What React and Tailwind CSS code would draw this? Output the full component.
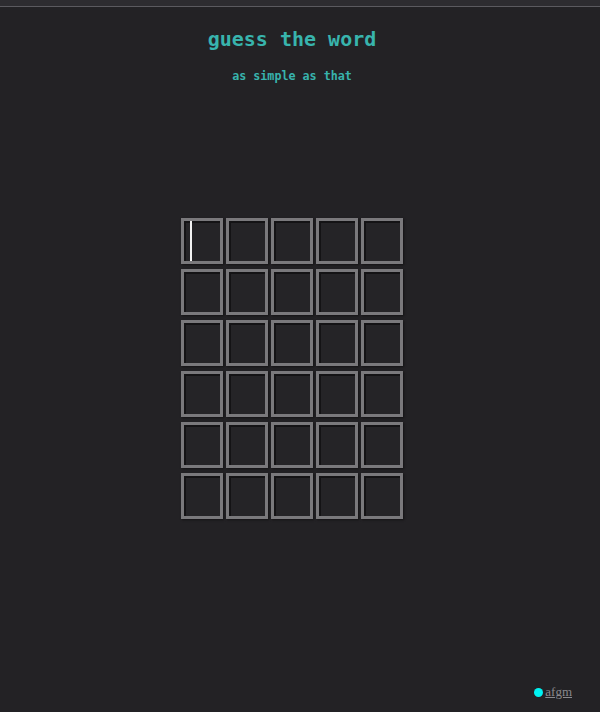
import React from "react";

const ROWS = 6;
const COLS = 5;

function Tile({ active }) {
  return (
    <div className="relative w-[42px] h-[46px] border-[3px] border-[#7a797c] bg-[#252427] shadow-[inset_1px_1px_0_1px_#141315,1px_1px_2px_#141315]">
      {active && <span className="absolute left-[6px] top-0 w-[2px] h-[40px] bg-[#f2f2f2]" />}
    </div>
  );
}

export default function App() {
  return (
    <div className="min-h-[712px] flex flex-col bg-[#232225]" style={{ fontFamily: "'DejaVu Sans Mono', monospace" }}>
      {/* top strip */}
      <div className="h-[7px] bg-[#2d2c30] border-b border-[#5b5a5f]" />

      <div className="flex flex-col pr-[16px]">
        <header className="flex flex-col items-center">
          <h1 className="mt-[18px] text-[20px] leading-[28px] font-bold text-[#38b4ad]">guess the word</h1>
          <p className="mt-[15px] text-[11.7px] leading-[16px] font-bold text-[#38b4ad]">as simple as that</p>
        </header>

        <main className="flex justify-center mt-[134px]">
          <div className="grid grid-cols-5 gap-x-[3px] gap-y-[5px]">
            {Array.from({ length: ROWS * COLS }).map((_, i) => (
              <Tile key={i} active={i === 0} />
            ))}
          </div>
        </main>
      </div>

      <div className="flex-1" />

      {/* footer badge */}
      <footer className="flex justify-end items-center gap-[2px] pr-[28px] pb-[12px]">
        <span className="w-[9px] h-[9px] rounded-full bg-[#00f2f2]" />
        <a href="#" className="text-[13px] leading-[16px] text-[#8a898d] underline" style={{ fontFamily: "'Liberation Serif', serif" }}>
          afgm
        </a>
      </footer>
    </div>
  );
}
